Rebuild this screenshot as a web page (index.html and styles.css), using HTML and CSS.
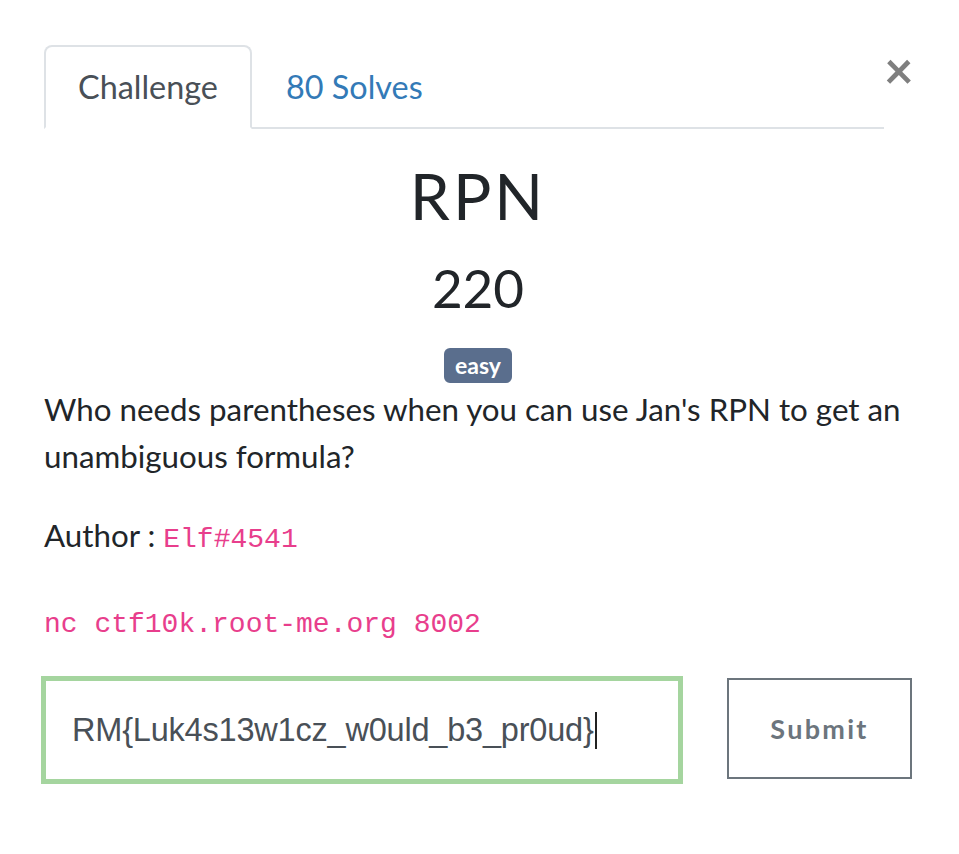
FILE: index.html
```html
<!DOCTYPE html>
<html>
<head>
<meta charset="utf-8">
<link rel="stylesheet" href="styles.css">
</head>
<body>
<div class="modal">
  <button class="close" type="button">×</button>
  <nav class="tabs">
    <a class="tab active">Challenge</a>
    <a class="tab link">80 Solves</a>
  </nav>
  <h3 class="name">RPN</h3>
  <h4 class="value">220</h4>
  <div class="tags"><span class="badge">easy</span></div>
  <p class="desc">Who needs parentheses when you can use Jan's RPN to get an unambiguous formula?</p>
  <p class="author">Author : <code>Elf#4541</code></p>
  <p class="conn"><code>nc ctf10k.root-me.org 8002</code></p>
  <div class="submit-row">
    <div class="input">RM{Luk4s13w1cz_w0uld_b3_pr0ud}<span class="caret"></span></div>
    <button class="submit" type="button">Submit</button>
  </div>
</div>
</body>
</html>
```
FILE: styles.css
```css
html, body {
  margin: 0;
  padding: 0;
  background: #fff;
}
body {
  font-family: Lato, "Noto Sans", sans-serif;
  color: #212529;
  font-size: 32.4px;
  line-height: 47px;
}
.modal {
  position: relative;
  width: 868px;
  padding: 45px 0 40px 44px;
}
.close {
  position: absolute;
  left: 884px;
  top: 42px;
  border: 0;
  background: none;
  padding: 0;
  font-family: Lato, sans-serif;
  font-size: 51px;
  font-weight: 700;
  line-height: 56px;
  color: #7f7f7f;
}
.tabs {
  display: flex;
  border-bottom: 2px solid #dee2e6;
  margin-right: 28px;
}
.tab {
  display: block;
  padding: 16px 32px 17px;
  line-height: 47px;
  border: 2px solid transparent;
  border-radius: 8px 8px 0 0;
  margin-bottom: -2px;
}
.tab.active {
  color: #495057;
  border-color: #dee2e6 #dee2e6 #fff;
  background: #fff;
}
.tab.link {
  color: #337ab7;
}
.name {
  margin: 29px 0 0;
  text-align: center;
  font-weight: 400;
  font-size: 64px;
  line-height: 1.2;
  letter-spacing: 3px;
}
.value {
  margin: 21px 0 0;
  text-align: center;
  font-weight: 400;
  font-size: 53px;
  line-height: 1.2;
}
.tags {
  margin-top: 29px;
  display: flex;
  justify-content: center;
  line-height: 1;
}
.badge {
  display: inline-block;
  background: #5a6e8d;
  color: #fff;
  font-weight: 700;
  font-size: 23px;
  line-height: 35px;
  height: 35px;
  padding: 0 11px;
  border-radius: 6px;
}
.desc,
.author {
  font-size: 31.3px;
}
.desc {
  margin: 3px 0 0;
}
.author {
  margin: 32px 0 0;
}
.conn {
  margin: 33px 0 0;
}
code {
  font-family: "Liberation Mono", monospace;
  font-size: 28px;
  color: #e83e8c;
}
.submit-row {
  display: flex;
  align-items: flex-start;
  margin: 28px 0 0 -3px;
  width: 871px;
  justify-content: space-between;
}
.input {
  box-sizing: border-box;
  width: 642px;
  height: 108px;
  border: 5px solid #a5d59f;
  padding: 0 0 0 26px;
  display: flex;
  align-items: center;
  font-family: "Liberation Sans", Arial, sans-serif;
  font-size: 32.5px;
  letter-spacing: -0.2px;
  color: #495057;
}
.caret {
  display: inline-block;
  width: 2px;
  height: 37px;
  background: #222;
  margin-left: 1px;
}
.submit {
  box-sizing: border-box;
  width: 185px;
  height: 101px;
  margin-top: 2px;
  background: #fff;
  border: 2px solid #6c757d;
  color: #6c757d;
  font-family: Lato, sans-serif;
  font-weight: 700;
  font-size: 27px;
  letter-spacing: 2.3px;
  padding: 0;
}
```
